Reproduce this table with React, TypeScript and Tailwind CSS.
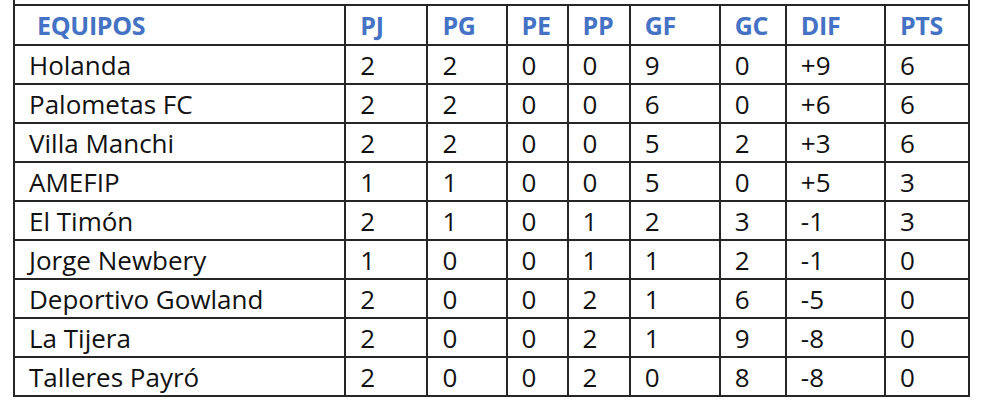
const teams = [
  ["Holanda", "2", "2", "0", "0", "9", "0", "+9", "6"],
  ["Palometas FC", "2", "2", "0", "0", "6", "0", "+6", "6"],
  ["Villa Manchi", "2", "2", "0", "0", "5", "2", "+3", "6"],
  ["AMEFIP", "1", "1", "0", "0", "5", "0", "+5", "3"],
  ["El Timón", "2", "1", "0", "1", "2", "3", "-1", "3"],
  ["Jorge Newbery", "1", "0", "0", "1", "1", "2", "-1", "0"],
  ["Deportivo Gowland", "2", "0", "0", "2", "1", "6", "-5", "0"],
  ["La Tijera", "2", "0", "0", "2", "1", "9", "-8", "0"],
  ["Talleres Payró", "2", "0", "0", "2", "0", "8", "-8", "0"],
];

const headers = ["EQUIPOS", "PJ", "PG", "PE", "PP", "GF", "GC", "DIF", "PTS"];
const widths = ["w-[331px]", "w-[82px]", "w-[79px]", "w-[61px]", "w-[62px]", "w-[90px]", "w-[66px]", "w-[99px]", "w-[84px]"];

export default function App() {
  return (
    <div className="w-[982px] h-[408px] bg-white overflow-hidden" style={{ fontFamily: '"Open Sans", sans-serif' }}>
      {/* tail of the table above */}
      <div className="ml-[13px] w-[957px] h-[4px] border-x-2 border-[#262626]" />
      <table className="ml-[13px] table-fixed border-collapse w-[957px]">
        <thead>
          <tr className="h-[40px]">
            {headers.map((h, i) => (
              <th
                key={h}
                className={`${widths[i]} border-2 border-[#262626] text-left align-middle font-bold text-[25px] leading-none tracking-[-0.3px] text-[#4472C4] ${i === 0 ? "pl-[22px]" : "pl-[14px]"}`}
              >
                {h}
              </th>
            ))}
          </tr>
        </thead>
        <tbody>
          {teams.map((row) => (
            <tr key={row[0]} className="h-[39px]">
              {row.map((c, i) => (
                <td
                  key={i}
                  className="border-2 border-[#262626] align-middle text-[26px] leading-none text-[#111] pl-[14px]"
                >
                  {c}
                </td>
              ))}
            </tr>
          ))}
        </tbody>
      </table>
    </div>
  );
}
